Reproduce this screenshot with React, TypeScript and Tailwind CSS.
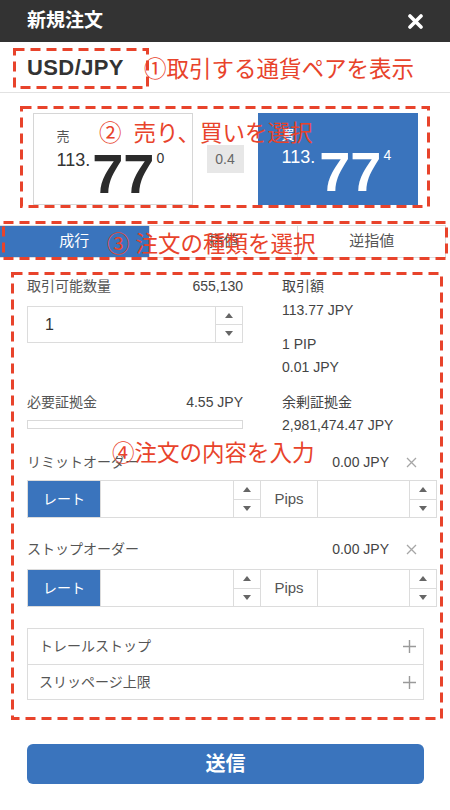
import React from "react";

function Dashed({ className, w, h }: { className: string; w: number; h: number }) {
  return (
    <div className={`pointer-events-none absolute ${className}`}>
      <svg width={w} height={h} className="block">
        <rect
          x={1.5}
          y={1.5}
          width={w - 3}
          height={h - 3}
          fill="none"
          stroke="#e8432b"
          strokeWidth={3}
          strokeDasharray="10 6"
        />
      </svg>
    </div>
  );
}

function Spinner() {
  return (
    <div className="flex w-[27px] flex-col border-l border-[#dcdcdc]">
      <div className="flex flex-1 items-center justify-center border-b border-[#dcdcdc]">
        <svg width="8" height="5" viewBox="0 0 8 5" className="block">
          <path d="M4 0 L8 5 L0 5 Z" fill="#666" />
        </svg>
      </div>
      <div className="flex flex-1 items-center justify-center">
        <svg width="8" height="5" viewBox="0 0 8 5" className="block">
          <path d="M0 0 L8 0 L4 5 Z" fill="#666" />
        </svg>
      </div>
    </div>
  );
}

function OrderRow() {
  return (
    <div className="flex h-[38px] w-[410px] border border-[#dcdcdc]">
      <div className="flex w-[72px] items-center justify-center bg-[#3a74bd] text-[14px] text-white">レート</div>
      <div className="w-[133px] border-l border-[#dcdcdc]" />
      <Spinner />
      <div className="flex w-[57px] items-center justify-center border-l border-[#dcdcdc] text-[15px] text-[#555]">Pips</div>
      <div className="flex-1 border-l border-[#dcdcdc]" />
      <Spinner />
    </div>
  );
}

function OrderLabel({ label }: { label: string }) {
  return (
    <div className="flex h-[20px] w-[390px] items-center justify-between text-[14px] leading-[20px]">
      <span>{label}</span>
      <div className="flex items-center gap-[17px]">
        <span className="text-[#444]">0.00 JPY</span>
        <svg width="11" height="11" viewBox="0 0 11 11" className="block">
          <path d="M1 1 L10 10 M10 1 L1 10" stroke="#a6a6a6" strokeWidth="1.3" />
        </svg>
      </div>
    </div>
  );
}

function Plus() {
  return (
    <svg width="13" height="13" viewBox="0 0 13 13" className="block">
      <path d="M6.5 0 V13 M0 6.5 H13" stroke="#9a9a9a" strokeWidth="1.4" />
    </svg>
  );
}

export default function App() {
  return (
    <div className="relative h-[810px] w-[450px] overflow-hidden bg-white font-['Liberation_Sans','Noto_Sans_CJK_JP',sans-serif] text-[#555]">
      {/* header */}
      <header className="flex h-[42px] items-center justify-between bg-[#333333] px-[27px]">
        <span className="text-[19px] font-bold text-white">新規注文</span>
        <svg width="15" height="15" viewBox="0 0 15 15" className="block">
          <path d="M2 2 L13 13 M13 2 L2 13" stroke="#ffffff" strokeWidth="3.6" strokeLinecap="round" />
        </svg>
      </header>

      {/* pair */}
      <div className="flex h-[51px] items-center border-b border-[#e2e2e2] pl-[27px]">
        <span className="text-[22px] font-bold tracking-[0.4px] text-[#333]">USD/JPY</span>
      </div>

      {/* prices */}
      <div className="flex justify-center gap-[14px] pt-[20px]">
        <div className="h-[92px] w-[160px] border border-[#d6d6d6] pl-[23px] pt-[16px]">
          <div className="text-[13px] leading-[13px] text-[#555]">売</div>
          <div className="mt-[3px] flex items-start">
            <span className="mt-[5px] text-[18px] leading-[18px] text-[#333]">113.</span>
            <span className="ml-[2px] text-[56px] font-bold leading-[55px] text-[#2b2b2b]">77</span>
            <span className="ml-[2px] mt-[5px] text-[14px] leading-[14px] text-[#333]">0</span>
          </div>
        </div>
        <div className="flex h-[92px] items-center">
          <div className="flex h-[28px] w-[37px] items-center justify-center bg-[#e7e7e7] text-[14px] text-[#666]">0.4</div>
        </div>
        <div className="h-[92px] w-[160px] bg-[#3a74bd] pl-[24px] pt-[15px] text-white">
          <div className="text-[13px] leading-[13px]">買</div>
          <div className="mt-[3px] flex items-start">
            <span className="mt-[4px] text-[18px] leading-[18px]">113.</span>
            <span className="ml-[4px] text-[56px] font-bold leading-[55px]">77</span>
            <span className="ml-[2px] mt-[4px] text-[14px] leading-[14px]">4</span>
          </div>
        </div>
      </div>

      {/* tabs */}
      <div className="mt-[20px] grid h-[33px] w-[446px] grid-cols-3 border-y border-[#dcdcdc] text-[15px]">
        <div className="flex items-center justify-center bg-[#3a74bd] text-white">成行</div>
        <div className="flex items-center justify-center border-l border-[#dcdcdc] text-[#555]">指値</div>
        <div className="flex items-center justify-center border-x border-[#dcdcdc] text-[#555]">逆指値</div>
      </div>

      {/* form */}
      <div className="px-[27px] pt-[18px] text-[14px]">
        <div className="flex items-start gap-[39px]">
          <div className="w-[216px]">
            <div className="flex h-[20px] items-center justify-between leading-[20px]">
              <span>取引可能数量</span>
              <span className="text-[#444]">655,130</span>
            </div>
            <div className="mt-[10px] flex h-[37px] border border-[#dcdcdc]">
              <div className="flex flex-1 items-center pl-[17px] text-[16px] text-[#333]">1</div>
              <Spinner />
            </div>
          </div>
          <div className="flex flex-col leading-[20px] text-[#444]">
            <span>取引額</span>
            <span className="mt-[4px]">113.77 JPY</span>
            <span className="mt-[14px]">1 PIP</span>
            <span className="mt-[3px]">0.01 JPY</span>
          </div>
        </div>

        <div className="mt-[15px] flex items-start gap-[39px]">
          <div className="w-[216px]">
            <div className="flex h-[20px] items-center justify-between leading-[20px]">
              <span>必要証拠金</span>
              <span className="text-[#444]">4.55 JPY</span>
            </div>
            <div className="mt-[8px] h-[9px] border border-[#d9d9d9] bg-white" />
          </div>
          <div className="flex flex-col leading-[20px] text-[#444]">
            <span>余剰証拠金</span>
            <span className="mt-[3px]">2,981,474.47 JPY</span>
          </div>
        </div>

        <div className="mt-[17px]">
          <OrderLabel label="リミットオーダー" />
        </div>
        <div className="mt-[8px]">
          <OrderRow />
        </div>

        <div className="mt-[21px]">
          <OrderLabel label="ストップオーダー" />
        </div>
        <div className="mt-[10px]">
          <OrderRow />
        </div>

        <div className="mt-[21px] w-[397px] border border-[#dcdcdc]">
          <div className="flex h-[35px] items-center justify-between pl-[11px] pr-[7px]">
            <span>トレールストップ</span>
            <Plus />
          </div>
          <div className="flex h-[35px] items-center justify-between border-t border-[#dcdcdc] pl-[11px] pr-[7px]">
            <span>スリッページ上限</span>
            <Plus />
          </div>
        </div>

        <button className="mt-[44px] flex h-[40px] w-[397px] items-center justify-center rounded-[6px] bg-[#3a74bd] text-[20px] font-bold text-white">
          送信
        </button>
      </div>

      {/* annotations */}
      <Dashed className="left-[13px] top-[48px]" w={136} h={41} />
      <Dashed className="left-[20px] top-[106px]" w={410} h={102} />
      <Dashed className="left-[2px] top-[221px]" w={446} h={39} />
      <Dashed className="left-[11px] top-[272px]" w={432} h={448} />

      <span className="absolute left-[144px] top-[56px] whitespace-nowrap font-['Noto_Sans_CJK_JP',sans-serif] text-[22.5px] leading-none text-[#e8432b]">
        ①取引する通貨ペアを表示
      </span>
      <span className="absolute left-[99px] top-[120px] flex whitespace-nowrap font-['Noto_Sans_CJK_JP',sans-serif] text-[22.5px] leading-none text-[#e8432b]">
        <span className="mr-[12px]">②</span>
        <span>売り、買いを選択</span>
      </span>
      <span className="absolute left-[107px] top-[231px] flex whitespace-nowrap font-['Noto_Sans_CJK_JP',sans-serif] text-[22.5px] leading-none text-[#e8432b]">
        <span className="mr-[6px]">③</span>
        <span>注文の種類を選択</span>
      </span>
      <span className="absolute left-[112px] top-[440px] whitespace-nowrap font-['Noto_Sans_CJK_JP',sans-serif] text-[22.5px] leading-none text-[#e8432b]">
        ④注文の内容を入力
      </span>
    </div>
  );
}
